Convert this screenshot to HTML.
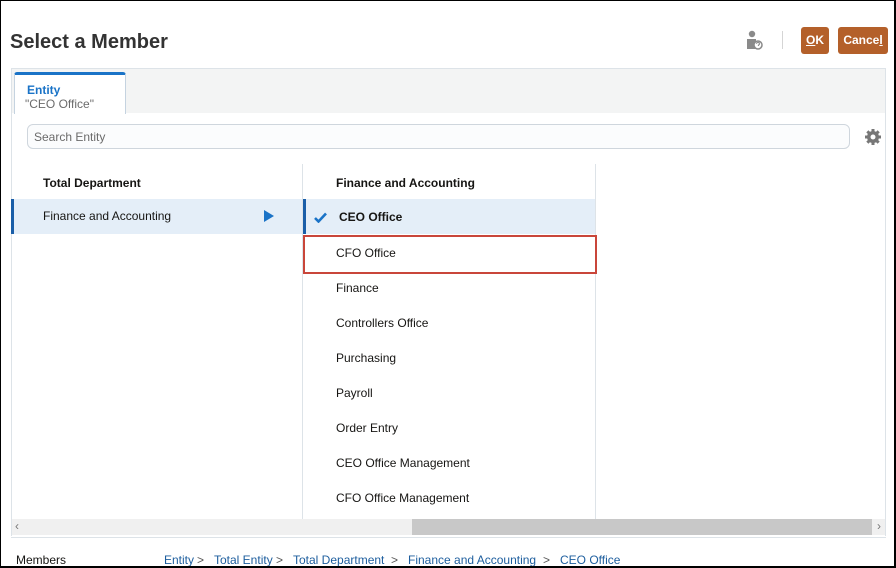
<!DOCTYPE html>
<html><head><style>
*{margin:0;padding:0;box-sizing:border-box}
body{width:896px;height:568px;overflow:hidden;background:#fff;font-family:"Liberation Sans",Arial,sans-serif;font-size:12px;color:#161513;position:relative}
.frame{position:absolute;left:0;top:0;width:896px;height:568px;border:1px solid #000;border-right-width:2px;border-bottom-width:2px}
.abs{position:absolute}
.title{left:10px;top:31px;font-size:20px;font-weight:bold;color:#333}
.btn{background:#b4602a;color:#fff;font-weight:bold;font-size:12px;border-radius:3px;text-align:center;line-height:27px;top:27px;height:27px}
.panel{left:11px;top:68px;width:875px;height:468px;border:1px solid #dde3e8;border-bottom:none}
.tabbar{left:12px;top:69px;width:873px;height:44px;background:#f3f4f4}
.tab{left:14px;top:72px;width:112px;height:42px;background:#fff;border:1px solid #c5d3e0;border-top:3px solid #1a73c7;border-bottom:none;border-radius:3px 3px 0 0}
.row{position:absolute;height:35px;line-height:37px}
.bc{position:absolute;top:553px;color:#1d5e9e}
.gt{position:absolute;top:553px;color:#555}
</style></head><body>
<div class="abs title">Select a Member</div>
<svg class="abs" style="left:745px;top:30px" width="20" height="22" viewBox="0 0 20 22"><circle cx="7" cy="4" r="3.2" fill="#8a8a8a"/><path d="M2 9h9v10H2z" fill="#8a8a8a"/><circle cx="13" cy="15" r="4" fill="#fff" stroke="#8a8a8a" stroke-width="1.5"/><path d="M11.6 13.8a1.4 1.4 0 1 1 1.8 1.3v.9" stroke="#8a8a8a" stroke-width="1.1" fill="none"/></svg>
<div class="abs" style="left:782px;top:31px;width:1px;height:18px;background:#d5d5d5"></div>
<div class="abs btn" style="left:801px;width:28px"><u>O</u>K</div>
<div class="abs btn" style="left:838px;width:50px">Cance<u>l</u></div>
<div class="abs panel"></div>
<div class="abs tabbar"></div>
<div class="abs tab"></div>
<div class="abs" style="left:27px;top:83px;font-weight:bold;color:#1a73c7">Entity</div>
<div class="abs" style="left:25px;top:97px;color:#6b6b6b">"CEO Office"</div>
<div class="abs" style="left:27px;top:124px;width:823px;height:25px;border:1px solid #cfd6dd;border-radius:6px;background:#fbfcfd;color:#6b6b6b;line-height:24px;padding-left:6px">Search Entity</div>
<svg class="abs" style="left:864px;top:128px" width="18" height="18" viewBox="0 0 18 18"><g fill="#777"><circle cx="9" cy="9" r="6"/><rect x="7.5" y="1" width="3" height="16"/><rect x="1" y="7.5" width="16" height="3"/><rect x="7.5" y="1" width="3" height="16" transform="rotate(45 9 9)"/><rect x="7.5" y="1" width="3" height="16" transform="rotate(-45 9 9)"/></g><circle cx="9" cy="9" r="2.5" fill="#fff"/></svg>
<div class="abs" style="left:302px;top:164px;width:1px;height:355px;background:#dde3e8"></div>
<div class="abs" style="left:595px;top:164px;width:1px;height:355px;background:#dde3e8"></div>
<div class="abs" style="left:43px;top:176px;font-weight:bold">Total Department</div>
<div class="row" style="left:11px;top:199px;width:291px;background:#e4eef8;border-left:3px solid #1a5ea8;padding-left:29px;line-height:35px">Finance and Accounting</div>
<svg class="abs" style="left:264px;top:210px" width="11" height="12"><path d="M0 0L10 6L0 12z" fill="#1a73c7"/></svg>
<div class="abs" style="left:336px;top:176px;font-weight:bold">Finance and Accounting</div>
<div class="row" style="left:303px;top:199px;width:292px;background:#e4eef8;border-left:3px solid #1a5ea8;padding-left:33px;font-weight:bold">CEO Office</div>
<svg class="abs" style="left:314px;top:212px" width="13" height="11"><path d="M1 6l3.5 3.5L12 1.5" stroke="#1a73c7" stroke-width="2.6" fill="none"/></svg>
<div class="row" style="left:336px;top:235px">CFO Office</div>
<div class="abs" style="left:303px;top:235px;width:294px;height:39px;border:2px solid #c9463a"></div>
<div class="row" style="left:336px;top:270px">Finance</div>
<div class="row" style="left:336px;top:305px">Controllers Office</div>
<div class="row" style="left:336px;top:340px">Purchasing</div>
<div class="row" style="left:336px;top:375px">Payroll</div>
<div class="row" style="left:336px;top:410px">Order Entry</div>
<div class="row" style="left:336px;top:445px">CEO Office Management</div>
<div class="row" style="left:336px;top:480px">CFO Office Management</div>
<div class="abs" style="left:12px;top:519px;width:873px;height:16px;background:#f0f0f0"></div>
<div class="abs" style="left:412px;top:519px;width:460px;height:16px;background:#c8c8c8"></div>
<div class="abs" style="left:15px;top:519px;color:#777;font-size:12px">&lsaquo;</div>
<div class="abs" style="left:877px;top:519px;color:#777;font-size:12px">&rsaquo;</div>
<div class="abs" style="left:11px;top:537px;width:875px;height:1px;background:#dde3e8"></div>
<div class="abs" style="left:16px;top:553px">Members</div>
<div class="bc" style="left:164px">Entity</div><div class="gt" style="left:197px">&gt;</div>
<div class="bc" style="left:214px">Total Entity</div><div class="gt" style="left:276px">&gt;</div>
<div class="bc" style="left:293px">Total Department</div><div class="gt" style="left:391px">&gt;</div>
<div class="bc" style="left:408px">Finance and Accounting</div><div class="gt" style="left:543px">&gt;</div>
<div class="bc" style="left:560px">CEO Office</div>
<div class="frame"></div>
</body></html>
